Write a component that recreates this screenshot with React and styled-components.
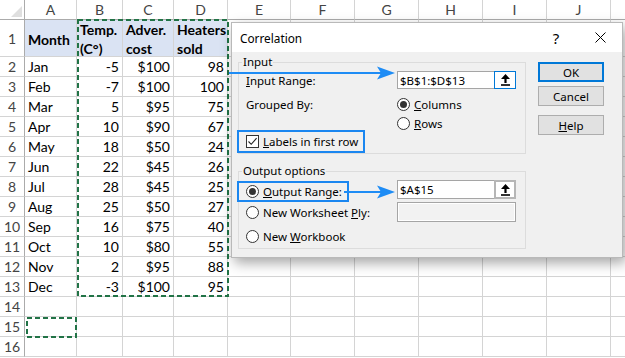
import styled, { createGlobalStyle } from "styled-components";

const GlobalStyle = createGlobalStyle`
  body {
    margin: 0;
    background: #fff;
    overflow: hidden;
  }
`;

const columns = ["A", "B", "C", "D", "E", "F", "G", "H", "I", "J", ""];

const data = [
  ["Jan", -5, 100, 98],
  ["Feb", -7, 100, 100],
  ["Mar", 5, 95, 75],
  ["Apr", 10, 90, 67],
  ["May", 18, 50, 24],
  ["Jun", 22, 45, 26],
  ["Jul", 28, 45, 25],
  ["Aug", 25, 50, 27],
  ["Sep", 16, 75, 40],
  ["Oct", 10, 80, 55],
  ["Nov", 2, 95, 88],
  ["Dec", -3, 100, 95],
];

const headers = [["Month"], ["Temp.", "(C°)"], ["Adver.", "cost"], ["Heaters", "sold"]];

const UpIcon = () => (
  <svg width="9" height="12" viewBox="0 0 9 12">
    <polygon points="4.5,0 9,5 5.6,5 5.6,9 3.4,9 3.4,5 0,5" fill="#000" />
    <rect x="0" y="10.2" width="9" height="1.6" fill="#000" />
  </svg>
);

const Check = () => (
  <svg width="11" height="11" viewBox="0 0 11 11">
    <polyline points="1.5,5.5 4.2,8.3 9.6,2.2" fill="none" stroke="#222" strokeWidth="1.1" />
  </svg>
);

const CloseIcon = () => (
  <svg width="11" height="11" viewBox="0 0 11 11">
    <path d="M0.5 0.5 L10.5 10.5 M10.5 0.5 L0.5 10.5" stroke="#000" strokeWidth="1" />
  </svg>
);

const Marquee = ({ x, y, w, h }) => (
  <MarqueeSvg $x={x} $y={y} width={w + 2} height={h + 2}>
    <rect x="1" y="1" width={w} height={h} fill="none" stroke="#217346" strokeWidth="2" strokeDasharray="5 3" />
  </MarqueeSvg>
);

const App = () => {
  return (
    <Page>
      <GlobalStyle />
      <Sheet>
        <Corner />
        {columns.map((c, i) => (
          <ColHead key={i}>{c}</ColHead>
        ))}

        <RowHead>1</RowHead>
        {headers.map((lines, i) => (
          <Cell key={i} $bold $fill="#dae3f3">
            {lines.map((l) => (
              <span key={l}>{l}</span>
            ))}
          </Cell>
        ))}
        {columns.slice(4).map((c, i) => (
          <Cell key={i} />
        ))}

        {data.map(([m, t, a, s], r) => [
          <RowHead key={`h${r}`}>{r + 2}</RowHead>,
          <Cell key={`a${r}`}>{m}</Cell>,
          <Cell key={`b${r}`} $right>{t}</Cell>,
          <Cell key={`c${r}`} $right>${a}</Cell>,
          <Cell key={`d${r}`} $right>{s}</Cell>,
          ...columns.slice(4).map((c, i) => <Cell key={`e${i}-${r}`} />),
        ])}

        {[14, 15, 16].map((n) => [
          <RowHead key={`h${n}`}>{n}</RowHead>,
          ...columns.map((c, i) => <Cell key={`x${i}-${n}`} />),
        ])}
      </Sheet>

      <Marquee x={77} y={19} w={150} h={276} />
      <Marquee x={26} y={317} w={49} h={19} />

      <Dialog>
        <TitleBar>
          <Title>Correlation</Title>
          <TitleButton $big>?</TitleButton>
          <TitleButton>
            <CloseIcon />
          </TitleButton>
        </TitleBar>
        <DialogBody>
          <Groups>
            <GroupBox $h={92}>
              <Legend>Input</Legend>
              <FormRow $h={18}>
                <span>
                  <U>I</U>nput Range:
                </span>
                <Field $h={18}>
                  <FieldText>$B$1:$D$13</FieldText>
                  <CollapseButton $focused>
                    <UpIcon />
                  </CollapseButton>
                </Field>
              </FormRow>
              <FormRow $h={18} $mt={7}>
                <span>Grouped By:</span>
                <Choice>
                  <Radio $checked />
                  <span>
                    <U>C</U>olumns
                  </span>
                </Choice>
              </FormRow>
              <FormRow $h={18} $mt={1}>
                <span />
                <Choice>
                  <Radio />
                  <span>
                    <U>R</U>ows
                  </span>
                </Choice>
              </FormRow>
              <Highlight $h={24} $mt={-2}>
                <Choice>
                  <CheckBox>
                    <Check />
                  </CheckBox>
                  <span>
                    <U>L</U>abels in first row
                  </span>
                </Choice>
              </Highlight>
            </GroupBox>

            <GroupBox $h={78}>
              <Legend>Output options</Legend>
              <FormRow $h={22} $top>
                <Highlight $h={21} $mt={1}>
                  <Choice>
                    <Radio $checked />
                    <span>
                      <U>O</U>utput Range:
                    </span>
                  </Choice>
                </Highlight>
                <Field $h={19}>
                  <FieldText>$A$15</FieldText>
                  <CollapseButton>
                    <UpIcon />
                  </CollapseButton>
                </Field>
              </FormRow>
              <FormRow $h={20}>
                <Choice>
                  <Radio />
                  <span>
                    New Worksheet <U>P</U>ly:
                  </span>
                </Choice>
                <Field $h={20} $disabled />
              </FormRow>
              <FormRow $h={20} $mt={4}>
                <Choice>
                  <Radio />
                  <span>
                    New <U>W</U>orkbook
                  </span>
                </Choice>
              </FormRow>
            </GroupBox>
          </Groups>

          <Buttons>
            <Button $default>OK</Button>
            <Button $mt={4}>Cancel</Button>
            <Button $mt={9}>
              <span>
                <U>H</U>elp
              </span>
            </Button>
          </Buttons>
        </DialogBody>
      </Dialog>

      <ArrowLayer width="625" height="358" viewBox="0 0 625 358">
        <path d="M229 73 H382" stroke="#1e8cf5" strokeWidth="2" />
        <path d="M395 73 L377 66.5 L381 73 L377 79.5 Z" fill="#1e8cf5" />
        <path d="M344 192 H382" stroke="#1e8cf5" strokeWidth="2" />
        <path d="M395 192 L377 185.5 L381 192 L377 198.5 Z" fill="#1e8cf5" />
      </ArrowLayer>
    </Page>
  );
};

export default App;

const Page = styled.div`
  position: relative;
  width: 625px;
  height: 358px;
  overflow: hidden;
  background: #fff;
`;

const Sheet = styled.div`
  display: grid;
  grid-template-columns: 25px 52px 46px 51px 54px 63px repeat(6, 64px);
  grid-template-rows: 20px 37px repeat(15, 20px);
  font-family: Lato, "Liberation Sans", sans-serif;
  font-size: 14px;
  color: #000;
`;

const Corner = styled.div`
  position: relative;
  box-sizing: border-box;
  border-right: 1px solid #ababab;
  border-bottom: 1px solid #ababab;

  &::after {
    content: "";
    position: absolute;
    right: 2px;
    bottom: 2px;
    border-left: 11px solid transparent;
    border-bottom: 11px solid #dfdfdf;
  }
`;

const ColHead = styled.div`
  box-sizing: border-box;
  border-right: 1px solid #d4d4d4;
  border-bottom: 1px solid #ababab;
  display: flex;
  align-items: center;
  justify-content: center;
  color: #444;
`;

const RowHead = styled.div`
  box-sizing: border-box;
  border-right: 1px solid #ababab;
  border-bottom: 1px solid #d4d4d4;
  display: flex;
  align-items: center;
  justify-content: center;
  color: #444;
`;

const Cell = styled.div`
  box-sizing: border-box;
  border-right: 1px solid #d4d4d4;
  border-bottom: 1px solid #d4d4d4;
  display: flex;
  flex-direction: column;
  justify-content: center;
  align-items: ${(p) => (p.$right ? "flex-end" : "flex-start")};
  padding: ${(p) => (p.$bold ? "2px 3px 0" : "0 3px")};
  background: ${(p) => p.$fill || "transparent"};
  font-weight: ${(p) => (p.$bold ? 700 : 400)};
  line-height: 19px;
  white-space: nowrap;
  overflow: hidden;
`;

const MarqueeSvg = styled.svg`
  position: absolute;
  left: ${(p) => p.$x}px;
  top: ${(p) => p.$y}px;
  pointer-events: none;
`;

const Dialog = styled.div`
  position: absolute;
  left: 231px;
  top: 22px;
  width: 392px;
  height: 236px;
  box-sizing: border-box;
  border: 1px solid #b9b9b9;
  background: #f0f0f0;
  box-shadow: 3px 5px 12px rgba(0, 0, 0, 0.35);
  display: flex;
  flex-direction: column;
  font-family: "Noto Sans", "Open Sans", sans-serif;
  font-size: 11.5px;
  color: #000;
  z-index: 2;
`;

const TitleBar = styled.div`
  height: 29px;
  flex: none;
  background: #fff;
  display: flex;
  align-items: center;
  padding-left: 8px;
`;

const Title = styled.div`
  flex: 1;
  font-size: 11.8px;
`;

const TitleButton = styled.div`
  width: 44px;
  height: 29px;
  display: flex;
  align-items: center;
  justify-content: center;
  font-size: ${(p) => (p.$big ? "15px" : "12px")};
`;

const DialogBody = styled.div`
  flex: 1;
  display: flex;
  gap: 12px;
  padding: 10px 0 0 6px;
`;

const Groups = styled.div`
  width: 288px;
  display: flex;
  flex-direction: column;
  gap: 17px;
`;

const GroupBox = styled.div`
  position: relative;
  box-sizing: border-box;
  height: ${(p) => p.$h}px;
  border: 1px solid #dcdcdc;
  padding: 8px 9px 0 7px;
  display: flex;
  flex-direction: column;
`;

const Legend = styled.span`
  position: absolute;
  top: -9px;
  left: 3px;
  padding: 0 1px;
  line-height: 16px;
  background: #f0f0f0;
`;

const FormRow = styled.div`
  display: grid;
  grid-template-columns: 151px 119px;
  align-items: ${(p) => (p.$top ? "start" : "center")};
  height: ${(p) => p.$h}px;
  margin-top: ${(p) => p.$mt || 0}px;
`;

const Field = styled.div`
  box-sizing: border-box;
  height: ${(p) => p.$h}px;
  border: 1px solid #a5a5a5;
  background: ${(p) => (p.$disabled ? "#f2f2f2" : "#fff")};
  box-shadow: ${(p) => (p.$disabled ? "inset 0 0 0 1px #fff" : "none")};
  display: flex;
  align-items: center;
`;

const FieldText = styled.span`
  flex: 1;
  padding-left: 2px;
`;

const CollapseButton = styled.div`
  box-sizing: border-box;
  width: 22px;
  align-self: stretch;
  display: flex;
  align-items: center;
  justify-content: center;
  background: #fff;
  border: ${(p) => (p.$focused ? "1px solid #0078d7" : "2px solid #b6b6b6")};
  margin: -1px -1px -1px 0;
`;

const Choice = styled.label`
  display: inline-flex;
  align-items: center;
  gap: 4px;
  white-space: nowrap;
`;

const Radio = styled.span`
  box-sizing: border-box;
  width: 13px;
  height: 13px;
  flex: none;
  border-radius: 50%;
  border: 1px solid #333;
  background: #fff;
  display: inline-flex;
  align-items: center;
  justify-content: center;

  &::after {
    content: "";
    width: 7px;
    height: 7px;
    border-radius: 50%;
    background: #333;
    display: ${(p) => (p.$checked ? "block" : "none")};
  }
`;

const CheckBox = styled.span`
  box-sizing: border-box;
  width: 13px;
  height: 13px;
  flex: none;
  border: 1px solid #333;
  background: #fff;
  display: inline-flex;
  align-items: center;
  justify-content: center;
`;

const Highlight = styled.div`
  box-sizing: border-box;
  align-self: flex-start;
  justify-self: start;
  display: inline-flex;
  align-items: center;
  height: ${(p) => p.$h}px;
  margin-top: ${(p) => p.$mt || 0}px;
  margin-left: -9px;
  padding: 0 5px 0 7px;
  border: 2px solid #1a86f0;
  position: relative;
`;

const U = styled.span`
  text-decoration: underline;
`;

const Buttons = styled.div`
  width: 66px;
  display: flex;
  flex-direction: column;
`;

const Button = styled.div`
  box-sizing: border-box;
  height: 20px;
  margin-top: ${(p) => p.$mt || 0}px;
  border: ${(p) => (p.$default ? "2px solid #0078d7" : "1px solid #adadad")};
  background: #e1e1e1;
  display: flex;
  align-items: center;
  justify-content: center;
`;

const ArrowLayer = styled.svg`
  position: absolute;
  left: 0;
  top: 0;
  pointer-events: none;
  z-index: 3;
`;
